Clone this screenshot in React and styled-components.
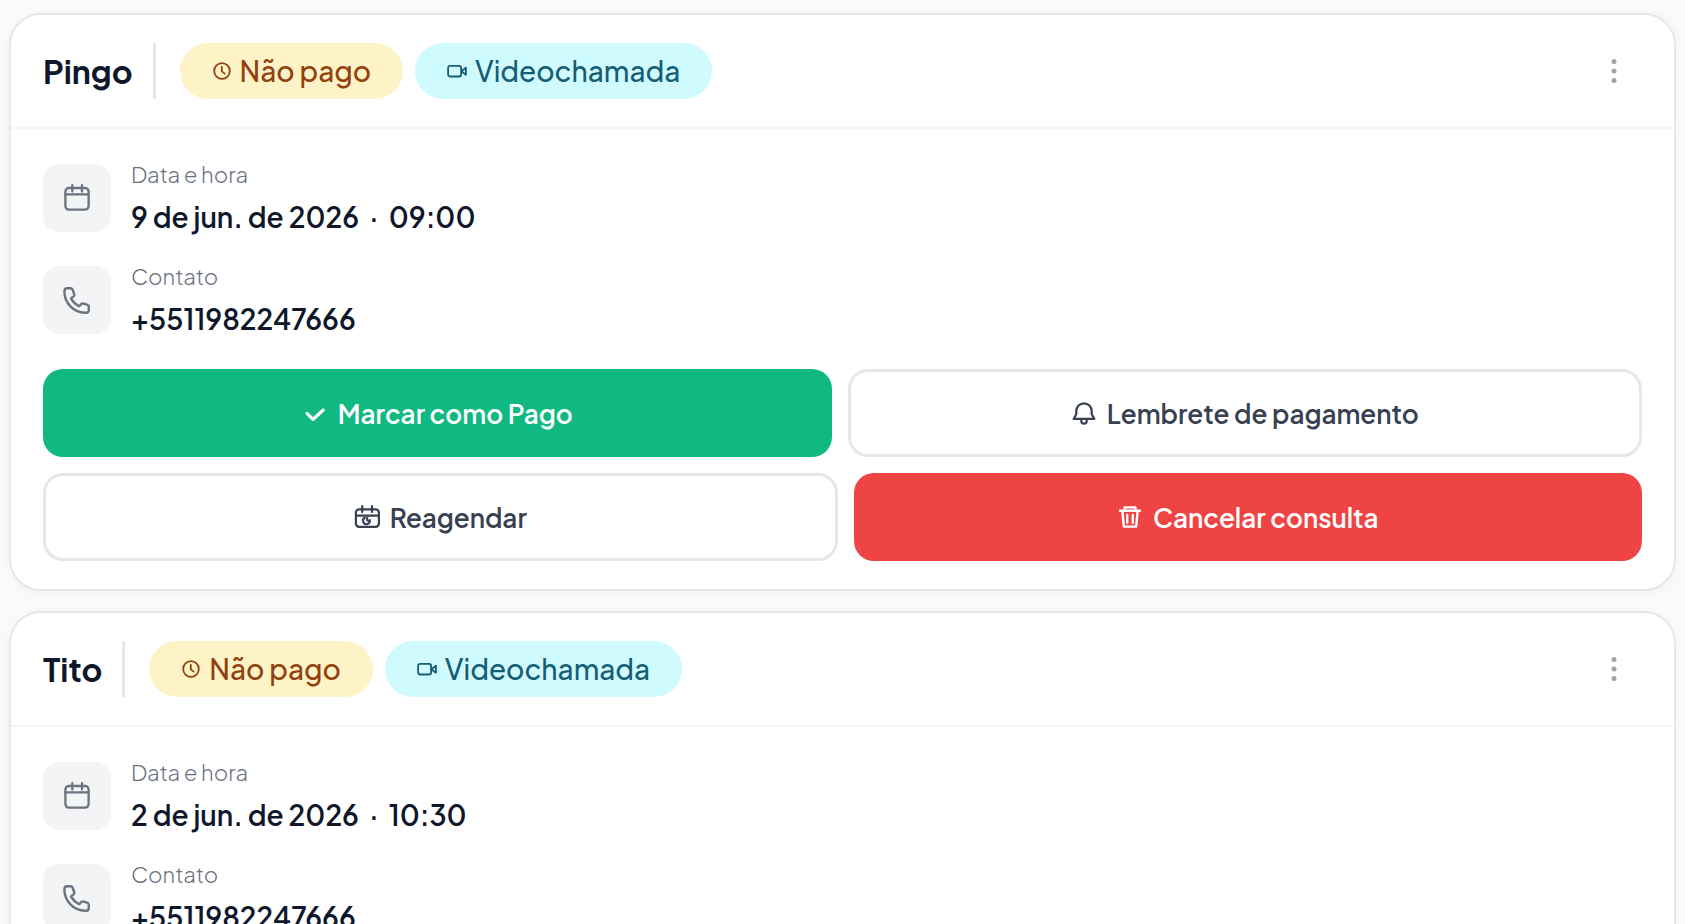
import styled, { createGlobalStyle, css } from 'styled-components'

const GlobalStyle = createGlobalStyle`
    * {
        box-sizing: border-box;
    }
    body {
        margin: 0;
        background-color: #f9fafc;
        font-family: 'Plus Jakarta Sans', Inter, sans-serif;
        color: #111827;
    }
`

const List = styled.main`
    display: flex;
    flex-direction: column;
    gap: 20px;
    padding: 13px 9px;
`

const Card = styled.article`
    background-color: #ffffff;
    border: 2px solid #e5e7eb;
    border-radius: 32px;
    box-shadow: 0 2px 12px rgba(15, 23, 42, 0.04);
`

const CardHeader = styled.header`
    display: flex;
    align-items: center;
    padding: 28px 32px;
    border-bottom: 2px solid #f3f4f6;
`

const Name = styled.h2`
    margin: 0;
    padding-right: 20px;
    border-right: 3px solid #e5e7eb;
    font-size: 32px;
    font-weight: 700;
    line-height: 56px;
    color: #0f172a;
`

const Badges = styled.div`
    display: flex;
    flex: 1;
    gap: 12px;
    margin-left: 24px;
`

const badgeColors = {
    unpaid: css`
        background-color: #fef3c7;
        color: #92400e;
    `,
    video: css`
        background-color: #cffafe;
        color: #155e75;
    `,
}

const Badge = styled.span`
    display: inline-flex;
    align-items: center;
    gap: 8px;
    padding: 0 32px;
    border-radius: 28px;
    font-size: 28px;
    font-weight: 500;
    line-height: 56px;
    ${({ $type }) => badgeColors[$type]}
`

const MenuButton = styled.button`
    display: flex;
    align-items: center;
    justify-content: center;
    width: 56px;
    height: 56px;
    padding: 0;
    border: none;
    border-radius: 16px;
    background: none;
    color: #9ca3af;
    cursor: pointer;
`

const CardBody = styled.div`
    padding: 32px 32px 28px;
`

const InfoList = styled.div`
    display: flex;
    flex-direction: column;
    gap: 28px;
    margin-bottom: 32px;
`

const InfoRow = styled.div`
    display: flex;
    align-items: center;
    gap: 20px;
`

const IconBox = styled.div`
    display: flex;
    align-items: center;
    justify-content: center;
    width: 68px;
    height: 68px;
    border-radius: 16px;
    background-color: #f3f4f6;
    color: #6b7280;
`

const InfoText = styled.div`
    display: flex;
    flex-direction: column;
    gap: 12px;
`

const Label = styled.span`
    font-size: 22px;
    font-weight: 300;
    line-height: 26px;
    color: #6b7280;
`

const Value = styled.span`
    font-size: 28px;
    font-weight: 600;
    line-height: 36px;
    color: #0f172a;
`

const Dot = styled.span`
    margin: 0 10px;
`

const Actions = styled.div`
    display: flex;
    flex-direction: column;
    gap: 16px;
`

const ActionRow = styled.div`
    display: flex;
    gap: 16px;
`

const actionColors = {
    outline: css`
        border: 3px solid #e5e7eb;
        background-color: #ffffff;
        color: #374151;
    `,
    success: css`
        background-color: #10b981;
        color: #ffffff;
    `,
    danger: css`
        background-color: #ef4444;
        color: #ffffff;
    `,
}

const ActionButton = styled.button`
    display: flex;
    flex: 1;
    align-items: center;
    justify-content: center;
    gap: 10px;
    height: 88px;
    padding: 0;
    border: none;
    border-radius: 20px;
    font-family: inherit;
    font-size: 26px;
    font-weight: 600;
    cursor: pointer;
    ${({ $variant }) => actionColors[$variant]}
`

const Svg = styled.svg.attrs({ 'aria-hidden': true })`
    flex: none;
    fill: none;
    stroke: currentColor;
    stroke-width: ${({ $stroke }) => $stroke || 2};
    stroke-linecap: round;
    stroke-linejoin: round;
`

const ClockIcon = () => (
    <Svg width="20" height="20" viewBox="0 0 20 20" $stroke={1.8}>
        <circle cx="10" cy="10" r="7.8" />
        <path d="M9.8 5.8v4.6l2.9 2.2" />
    </Svg>
)

const VideoIcon = () => (
    <Svg width="20" height="20" viewBox="0 0 20 20" $stroke={1.8}>
        <rect x="1.1" y="4.9" width="13" height="10.6" rx="2" />
        <path d="M14.4 10.2 18.9 6.6v7.2z" />
    </Svg>
)

const CalendarIcon = () => (
    <Svg width="30" height="30" viewBox="0 0 30 30" $stroke={2.3}>
        <rect x="3.4" y="5" width="23.2" height="21.6" rx="3.5" />
        <path d="M3.4 11.4h23.2M10.3 2.2v6.4M20 2.2v6.4" />
    </Svg>
)

const PhoneIcon = () => (
    <Svg width="30" height="30" viewBox="0 0 24 24" $stroke={1.9}>
        <path d="M1.9 5.2c0 9.2 7.5 17 16.4 17h1c1.300 0 2.100-.9 2.100-2.200v-2.600c0-.8-.5-1.500-1.300-1.700l-3.200-.9c-.6-.2-1.100 0-1.500.4l-1.300 1.500c-.2.2-.5.3-.8.1a16 16 0 0 1-5.900-5.600c-.2-.3-.1-.6.1-.8l1.800-1.300c.5-.4.7-1 .5-1.600L8.600 4c-.2-.8-.9-1.400-1.700-1.400H4.300C2.800 2.600 1.900 3.600 1.900 5.200z" />
    </Svg>
)

const CheckIcon = () => (
    <Svg width="26" height="26" viewBox="0 0 26 26" $stroke={3.2}>
        <path d="m5 13.4 6 6L21.200 10" />
    </Svg>
)

const BellIcon = () => (
    <Svg width="26" height="26" viewBox="0 0 26 26" $stroke={2.2}>
        <path d="M5.300 14.300V11a7.700 7.700 0 0 1 15.400 0v3.300l2.600 4.600H2.700z" />
        <path d="M10.300 19.500v1.500a2.700 2.700 0 0 0 5.400 0v-1.500" />
    </Svg>
)

const RescheduleIcon = () => (
    <Svg width="26" height="26" viewBox="0 0 26 26" $stroke={2.2}>
        <rect x="1.900" y="5.400" width="23" height="17.400" rx="3.200" />
        <path d="M1.900 11.600h23M8.200 2v6M18 2v6" />
        <path d="M10.800 13.800a3.400 3.400 0 1 0 5 2.400M13.200 13.800v2.500l1.800.9" />
    </Svg>
)

const TrashIcon = () => (
    <Svg width="26" height="26" viewBox="0 0 26 26" $stroke={2.4}>
        <path d="M3 6.800h20M7.600 6.400V3.400h10.800v3M5.400 6.800l1.400 15.800h12.400l1.400-15.800M10.200 11v7.800M15.800 11v7.800" />
    </Svg>
)

const MoreIcon = () => (
    <svg width="28" height="28" viewBox="0 0 28 28" fill="currentColor" aria-hidden="true">
        <circle cx="14" cy="4.4" r="2.5" />
        <circle cx="14" cy="14" r="2.5" />
        <circle cx="14" cy="23.6" r="2.5" />
    </svg>
)

const appointments = [
    { name: 'Pingo', date: '9 de jun. de 2026', time: '09:00', phone: '+5511982247666' },
    { name: 'Tito', date: '2 de jun. de 2026', time: '10:30', phone: '+5511982247666' },
]

const AppointmentCard = ({ name, date, time, phone }) => (
    <Card>
        <CardHeader>
            <Name>{name}</Name>
            <Badges>
                <Badge $type="unpaid">
                    <ClockIcon />
                    Não pago
                </Badge>
                <Badge $type="video">
                    <VideoIcon />
                    Videochamada
                </Badge>
            </Badges>
            <MenuButton type="button">
                <MoreIcon />
            </MenuButton>
        </CardHeader>
        <CardBody>
            <InfoList>
                <InfoRow>
                    <IconBox>
                        <CalendarIcon />
                    </IconBox>
                    <InfoText>
                        <Label>Data e hora</Label>
                        <Value>
                            {date}
                            <Dot>·</Dot>
                            {time}
                        </Value>
                    </InfoText>
                </InfoRow>
                <InfoRow>
                    <IconBox>
                        <PhoneIcon />
                    </IconBox>
                    <InfoText>
                        <Label>Contato</Label>
                        <Value>{phone}</Value>
                    </InfoText>
                </InfoRow>
            </InfoList>
            <Actions>
                <ActionRow>
                    <ActionButton type="button" $variant="success">
                        <CheckIcon />
                        Marcar como Pago
                    </ActionButton>
                    <ActionButton type="button" $variant="outline">
                        <BellIcon />
                        Lembrete de pagamento
                    </ActionButton>
                </ActionRow>
                <ActionRow>
                    <ActionButton type="button" $variant="outline">
                        <RescheduleIcon />
                        Reagendar
                    </ActionButton>
                    <ActionButton type="button" $variant="danger">
                        <TrashIcon />
                        Cancelar consulta
                    </ActionButton>
                </ActionRow>
            </Actions>
        </CardBody>
    </Card>
)

const App = () => {
    return (
        <>
            <GlobalStyle />
            <List>
                {appointments.map((item) => (
                    <AppointmentCard key={item.name} {...item} />
                ))}
            </List>
        </>
    )
}

export default App
